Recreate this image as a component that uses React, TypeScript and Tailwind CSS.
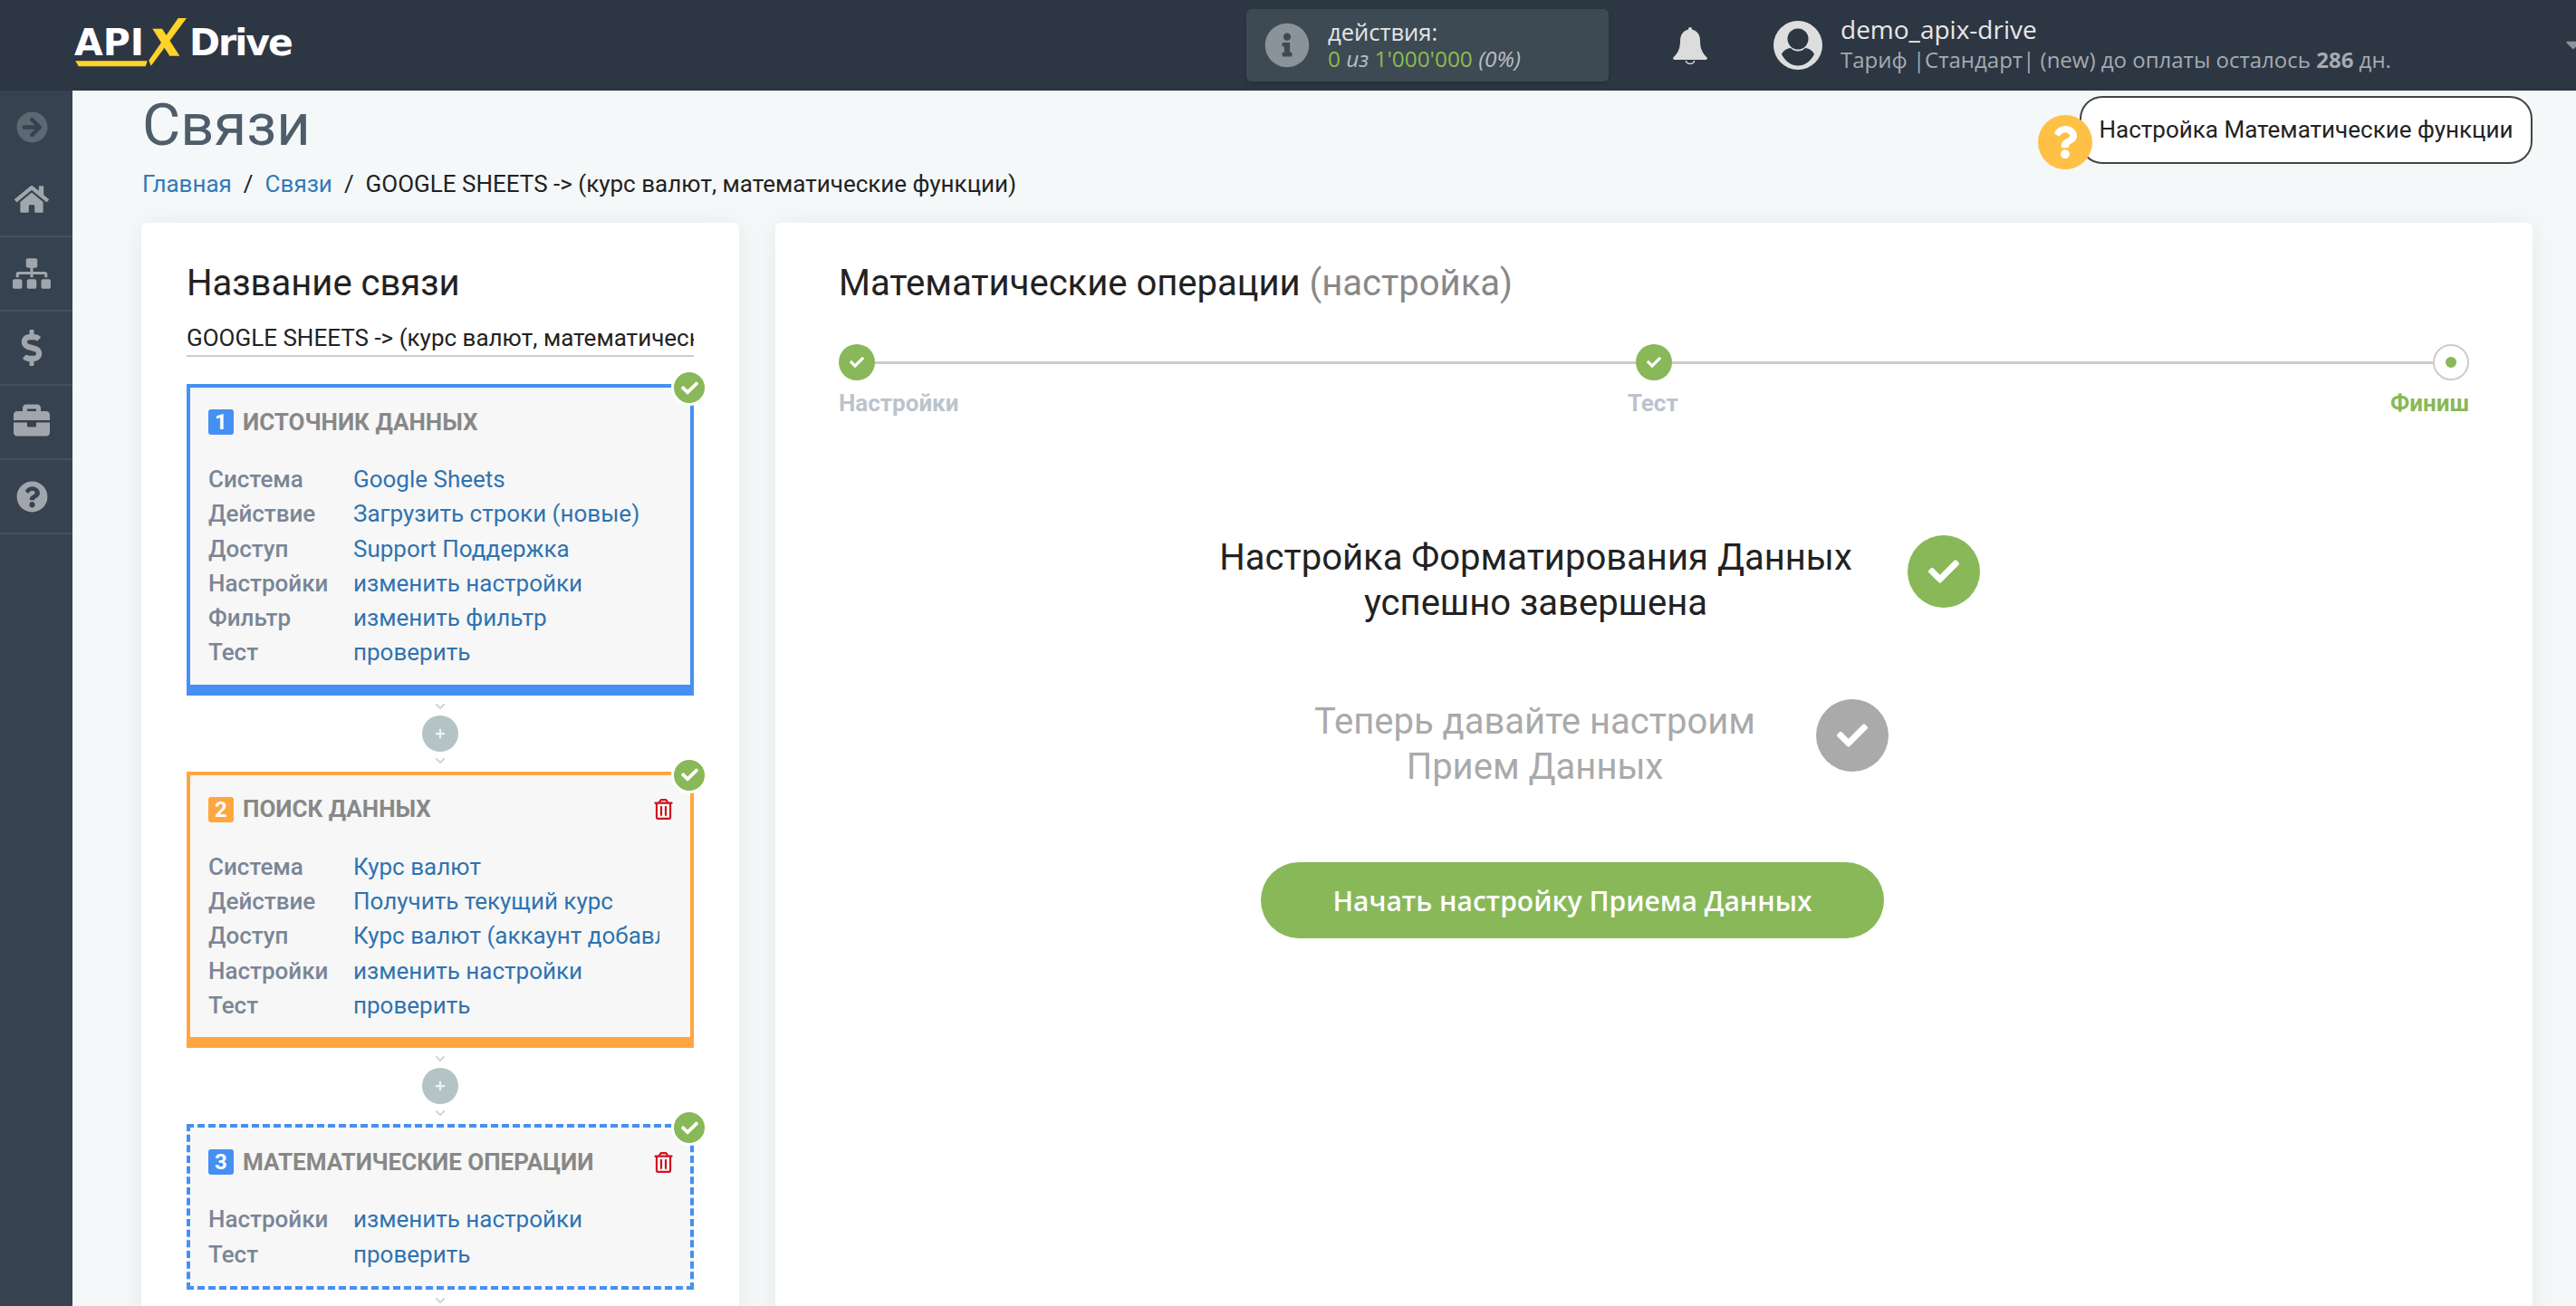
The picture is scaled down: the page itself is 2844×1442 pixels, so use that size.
import {
  FaArrowCircleRight,
  FaBriefcase,
  FaCaretDown,
  FaCheck,
  FaChevronDown,
  FaDollarSign,
  FaHome,
  FaInfoCircle,
  FaPlus,
  FaQuestion,
  FaQuestionCircle,
  FaRegTrashAlt,
  FaSitemap,
} from "react-icons/fa";

type Row = [string, string];

function Logo() {
  return (
    <div className="relative h-[60px] w-[240px] font-['DejaVu_Sans',sans-serif] text-[41px] font-bold leading-[54px] text-white">
      <span className="absolute left-0 top-0">API</span>
      <span className="absolute left-[127px] top-0 tracking-[-2px]">Drive</span>
      <svg className="absolute left-0 top-0" width="240" height="60" viewBox="0 0 240 60">
        <polygon points="1.3,47.3 80.7,47.3 78.7,53.3 4.7,53.3" fill="#ffd428" />
        <polygon points="114.7,0 124,0 84.7,52.7 82.3,46.7" fill="#ffd428" />
        <polygon points="86.3,11.7 97,11.7 116.3,41.7 105.3,41.7" fill="#ffd428" />
      </svg>
    </div>
  );
}

function BellIcon() {
  return (
    <svg className="ml-[71px]" width="38" height="41" viewBox="0 0 38 41">
      <path
        d="M19 0c1.5 0 2 1 2 2.5C27 4 30 9 30 15c0 8 2 13 8 19 0 1-1 2-2 2H2c-1 0-2-1-2-2C6 28 8 23 8 15 8 9 11 4 17 2.5 17 1 17.500 0 19 0z"
        fill="#dcdcdc"
      />
      <path d="M14.500 37a4.500 3.500 0 0 0 9 0" fill="none" stroke="#dcdcdc" strokeWidth="1.500" />
    </svg>
  );
}

function UserIcon() {
  return (
    <svg className="ml-[73px]" width="54" height="54" viewBox="0 0 54 54">
      <circle cx="27" cy="27" r="27" fill="#dedede" />
      <circle cx="27" cy="20" r="11.500" fill="#2d3643" />
      <path
        d="M9 37C11 32 16 30.500 19 30C21 32.500 24 33.500 27 33.500C30 33.500 33 32.500 35 30C38 30.500 43 32 45 37C41 45 34 49.500 27 49.500C20 49.500 13 45 9 37Z"
        fill="#2d3643"
      />
    </svg>
  );
}

function Header() {
  return (
    <header className="relative flex h-[100px] items-center overflow-hidden bg-[#2d3643] pl-[82px] font-['Open_Sans',sans-serif]">
      <Logo />
      <div className="ml-[1054px] flex h-[80px] w-[400px] items-center rounded-md bg-[#3d4a54] pl-5 shadow-md">
        <FaInfoCircle className="text-[#8a929a]" size={50} />
        <div className="ml-5">
          <div className="text-[25.5px] leading-[30px] text-[#e4e6e8]">действия:</div>
          <div className="text-[24.4px] leading-[30px] text-[#b9bec3]">
            <span className="text-[#8dbb4f]">0</span> <i>из</i>{" "}
            <span className="text-[#8dbb4f]">1'000'000</span> <i>(0%)</i>
          </div>
        </div>
      </div>
      <BellIcon />
      <UserIcon />
      <div className="ml-5 -mt-[2px]">
        <div className="text-[28px] leading-[34px] text-[#e8e8e8]">demo_apix-drive</div>
        <div className="text-[24px] leading-[34px] text-[#a5abb1]">
          Тариф |Стандарт| (new) до оплаты осталось <b>286</b> дн.
        </div>
      </div>
      <FaCaretDown className="absolute right-[-10px] top-[36px] text-[#8a929a]" size={26} />
    </header>
  );
}

function SideItem({ icon }: { icon: React.ReactNode }) {
  return (
    <div className="flex h-[82px] items-center justify-center border-b-2 border-[#44505c] pr-[10px] text-[#a0a6ac]">
      {icon}
    </div>
  );
}

function Sidebar() {
  return (
    <aside className="w-[80px] shrink-0 bg-[#36424f]">
      <div className="flex h-[80px] items-center justify-center pr-[10px] text-[#5d6873]">
        <FaArrowCircleRight size={35} />
      </div>
      <SideItem icon={<FaHome size={38} />} />
      <SideItem icon={<FaSitemap size={42} />} />
      <SideItem icon={<FaDollarSign size={40} />} />
      <SideItem icon={<FaBriefcase className="-mt-[4px]" size={40} />} />
      <SideItem icon={<FaQuestionCircle size={35} />} />
    </aside>
  );
}

function Done() {
  return (
    <div className="absolute right-[-19px] top-[-20px] flex h-[40px] w-[40px] items-center justify-center rounded-full border-[3px] border-white bg-[#88b858] text-white">
      <FaCheck size={19} />
    </div>
  );
}

function Connector() {
  return (
    <div className="flex h-[84px] flex-col items-center justify-center gap-[4px] text-[#c9d5d5]">
      <FaChevronDown size={12} />
      <div className="flex h-[40px] w-[40px] items-center justify-center rounded-full bg-[#b4c4c4] text-[#eef2f2]">
        <FaPlus size={12} />
      </div>
      <FaChevronDown size={12} />
    </div>
  );
}

function Block({
  num,
  title,
  rows,
  badge,
  frame,
  trash,
}: {
  num: number;
  title: string;
  rows: Row[];
  badge: string;
  frame: string;
  trash?: boolean;
}) {
  return (
    <div className={`relative bg-[#f7f7f7] px-5 pb-4 pt-6 ${frame}`}>
      <Done />
      <div className="flex h-[28px] items-center">
        <span
          className={`flex h-[28px] w-[28px] items-center justify-center rounded-[3px] text-[24px] font-bold leading-none text-white ${badge}`}
        >
          {num}
        </span>
        <span className="ml-[10px] text-[26px] font-bold text-[#888888]">{title}</span>
        {trash && <FaRegTrashAlt className="-mr-[2px] ml-auto text-[#d0121f]" size={23} />}
      </div>
      <div className="mt-[30px] text-[26px] leading-[38.3px]">
        {rows.map(([label, value]) => (
          <div key={label} className="flex">
            <span className="w-[160px] shrink-0 font-medium text-[#7a8696]">{label}</span>
            <span className="w-[338px] overflow-hidden whitespace-nowrap text-[#2f73b0]">{value}</span>
          </div>
        ))}
      </div>
    </div>
  );
}

function LeftCard() {
  return (
    <section className="w-[660px] shrink-0 rounded-md bg-white px-[50px] pb-[60px] pt-[44px] shadow-[0_0_30px_rgba(0,0,0,0.06)]">
      <h2 className="text-[40px] leading-[46px] text-[#222222]">Название связи</h2>
      <input
        readOnly
        value="GOOGLE SHEETS -> (курс валют, математические функции)"
        className="mt-[19px] h-[39px] w-[560px] border-b-2 border-[#cccccc] bg-transparent text-[26px] text-[#222222] outline-none"
      />
      <div className="mt-[30px]">
        <Block
          num={1}
          title="ИСТОЧНИК ДАННЫХ"
          badge="bg-[#4590f2]"
          frame="border-x-4 border-t-4 border-b-12 border-[#4590f2]"
          rows={[
            ["Система", "Google Sheets"],
            ["Действие", "Загрузить строки (новые)"],
            ["Доступ", "Support Поддержка"],
            ["Настройки", "изменить настройки"],
            ["Фильтр", "изменить фильтр"],
            ["Тест", "проверить"],
          ]}
        />
        <Connector />
        <Block
          num={2}
          title="ПОИСК ДАННЫХ"
          badge="bg-[#ffa640]"
          frame="border-x-4 border-t-4 border-b-12 border-[#ffa640]"
          trash
          rows={[
            ["Система", "Курс валют"],
            ["Действие", "Получить текущий курс"],
            ["Доступ", "Курс валют (аккаунт добавлен)"],
            ["Настройки", "изменить настройки"],
            ["Тест", "проверить"],
          ]}
        />
        <Connector />
        <Block
          num={3}
          title="МАТЕМАТИЧЕСКИЕ ОПЕРАЦИИ"
          badge="bg-[#4590f2]"
          frame="border-4 border-dashed border-[#4590f2]"
          trash
          rows={[
            ["Настройки", "изменить настройки"],
            ["Тест", "проверить"],
          ]}
        />
        <div className="flex justify-center pt-[6px] text-[#c9d5d5]">
          <FaChevronDown size={12} />
        </div>
      </div>
    </section>
  );
}

function Stepper() {
  return (
    <div className="mt-[42px]">
      <div className="flex items-center">
        <div className="flex h-[40px] w-[40px] shrink-0 items-center justify-center rounded-full bg-[#88b858] text-white">
          <FaCheck size={16} />
        </div>
        <div className="h-[3px] flex-1 bg-[#cccccc]" />
        <div className="flex h-[40px] w-[40px] shrink-0 items-center justify-center rounded-full bg-[#88b858] text-white">
          <FaCheck size={16} />
        </div>
        <div className="h-[3px] flex-1 bg-[#cccccc]" />
        <div className="flex h-[40px] w-[40px] shrink-0 items-center justify-center rounded-full border-2 border-[#cccccc]">
          <div className="h-[12px] w-[12px] rounded-full bg-[#88b858]" />
        </div>
      </div>
      <div className="mt-[10px] flex justify-between text-[26px] font-bold leading-[30px]">
        <span className="text-[#bcc3cd]">Настройки</span>
        <span className="relative left-[-24px] text-[#bcc3cd]">Тест</span>
        <span className="text-[#88b858]">Финиш</span>
      </div>
    </div>
  );
}

function Status({
  lines,
  color,
  tone,
  offset,
}: {
  lines: string[];
  color: string;
  tone: string;
  offset: string;
}) {
  return (
    <div className={`flex items-center justify-center ${offset}`}>
      <div className={`pt-5 text-center text-[40px] leading-[50px] ${color}`}>
        {lines.map((l) => (
          <div key={l}>{l}</div>
        ))}
      </div>
      <div className={`flex h-[80px] w-[80px] items-center justify-center rounded-full text-white ${tone}`}>
        <FaCheck size={34} />
      </div>
    </div>
  );
}

function RightCard() {
  return (
    <section className="flex-1 rounded-md bg-white px-[70px] pt-[42px] shadow-[0_0_30px_rgba(0,0,0,0.06)]">
      <h2 className="text-[40px] leading-[50px] text-[#222222]">
        Математические операции <span className="text-[#888888]">(настройка)</span>
      </h2>
      <Stepper />
      <div className="mt-[111px]">
        <Status
          lines={["Настройка Форматирования Данных", "успешно завершена"]}
          color="mr-[61px] text-[#222222]"
          tone="bg-[#88b858]"
          offset="pr-[120px]"
        />
        <div className="mt-[61px]">
          <Status
            lines={["Теперь давайте настроим", "Прием Данных"]}
            color="mr-[67px] text-[#aaaaaa]"
            tone="bg-[#aaaaaa]"
            offset="pr-[116px]"
          />
        </div>
        <div className="mt-[80px] flex justify-center pr-[180px]">
          <button className="h-[84px] w-[688px] rounded-full bg-[#88b858] font-['Open_Sans',sans-serif] text-[30px] font-semibold text-white">
            Начать настройку Приема Данных
          </button>
        </div>
      </div>
    </section>
  );
}

export default function App() {
  return (
    <div className="h-[1442px] overflow-hidden bg-[#f4f8f9] font-['Roboto',sans-serif]">
      <Header />
      <div className="flex h-[1342px]">
        <Sidebar />
        <main className="min-w-0 flex-1 pl-[76px] pr-[48px]">
          <div className="flex h-[146px] justify-between">
            <div className="pl-[1px] pt-[3px]">
              <h1 className="text-[65px] font-normal leading-[70px] text-[#4f5d6b]">Связи</h1>
              <nav className="mt-[12px] flex text-[26px] leading-[36px] text-[#222222]">
                <span className="text-[#337ab7]">Главная</span>
                <span className="mx-[13px]">/</span>
                <span className="text-[#337ab7]">Связи</span>
                <span className="mx-[13px]">/</span>
                <span>GOOGLE SHEETS -&gt; (курс валют, математические функции)</span>
              </nav>
            </div>
            <div className="relative mt-[6px] flex h-[75px] w-[500px] justify-center rounded-[25px] border-2 border-[#444444] bg-white pt-[18px] text-[26px] leading-[34px] text-[#222222]">
              Настройка Математические функции
              <div className="absolute bottom-[-8px] left-[-48px] flex h-[60px] w-[60px] items-center justify-center rounded-full bg-[#ffc145] text-white">
                <FaQuestion size={36} />
              </div>
            </div>
          </div>
          <div className="flex gap-10">
            <LeftCard />
            <RightCard />
          </div>
        </main>
      </div>
    </div>
  );
}
